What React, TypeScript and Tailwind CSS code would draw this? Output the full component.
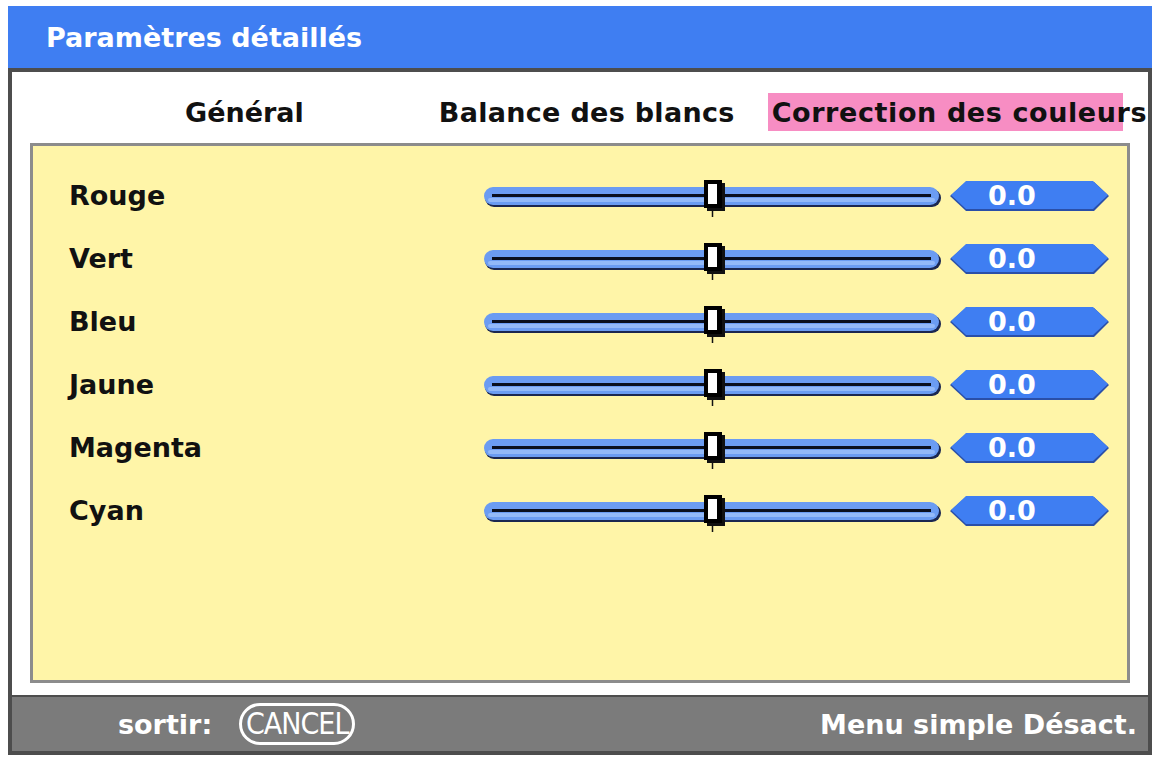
import React from 'react';

const font = { fontFamily: '"DejaVu Sans", "Liberation Sans", sans-serif' };

const colours = ['Rouge', 'Vert', 'Bleu', 'Jaune', 'Magenta', 'Cyan'];

const Slider: React.FC = () => (
  <svg width="460" height="40" viewBox="0 0 460 40" className="block">
    {/* shadow */}
    <rect x="1" y="12" width="456" height="18" rx="9" fill="#1b2750" />
    <rect x="0" y="10" width="455" height="18" rx="9" fill="#6b9cf2" />
    <rect x="4" y="21" width="447" height="4" rx="2" fill="#93b9f8" />
    <line x1="8" y1="18.5" x2="447" y2="18.5" stroke="#0a0f1e" strokeWidth="3" />
    {/* knob */}
    <rect x="223" y="6" width="18" height="28" fill="#111" />
    <rect x="220" y="3" width="18" height="28" fill="#000" />
    <rect x="224" y="7" width="9" height="20" fill="#fff" />
    <line x1="228.5" y1="33" x2="228.5" y2="40" stroke="#111" strokeWidth="1.5" />
  </svg>
);

const ValueBadge: React.FC<{ value: string }> = ({ value }) => (
  <div className="relative w-[160px] h-[30px]">
    <svg width="160" height="30" viewBox="0 0 160 30" className="absolute inset-0">
      <polygon points="0,15 16,1 144,1 159,15 144,30 16,30" fill="#2a4fa8" />
      <polygon points="1,14 16,0 143,0 158,14 143,28 16,28" fill="#3f7ef2" />
    </svg>
    <div
      className="relative h-full flex items-center justify-center pr-[36px] text-white font-bold text-[27px] leading-none"
      style={font}
    >
      {value}
    </div>
  </div>
);

export default function App() {
  return (
    <div className="min-h-screen bg-white pt-[6px] pl-[8px]" style={font}>
      <div className="w-[1144px]">
        {/* Title bar */}
        <div className="h-[62px] bg-[#3f7ef2] flex items-center pl-[38px]">
          <span className="text-white font-bold text-[27px] leading-none">Paramètres détaillés</span>
        </div>

        <div className="border-x-4 border-t-4 border-[#4d4d4d] bg-white pb-[12px]">
          {/* Tabs */}
          <div className="h-[71px] flex items-start pt-[21px] text-[27px] font-bold text-[#111] leading-none whitespace-nowrap">
            <span className="ml-[173px] h-[38px] flex items-center">Général</span>
            <span className="ml-[135px] h-[38px] flex items-center tracking-[0.3px]">Balance des blancs</span>
            <div className="ml-[33px] w-[355px] h-[38px] bg-[#f78dc3] flex items-center pl-[4px] overflow-visible">
              <span className="tracking-[0.6px]">Correction des couleurs</span>
            </div>
          </div>

          {/* Panel */}
          <div className="mx-[18px] h-[540px] border-[3px] border-[#8c8c8c] bg-[#fff5a8] pt-[18px]">
            {colours.map((c) => (
              <div key={c} className="h-[63px] flex items-center">
                <span className="w-[451px] pl-[36px] text-[27px] font-bold text-[#111] leading-none">{c}</span>
                <div className="w-[466px] mt-[2px]">
                  <Slider />
                </div>
                <ValueBadge value="0.0" />
              </div>
            ))}
          </div>
        </div>

        {/* Footer */}
        <div className="h-[60px] bg-[#7b7b7b] border-4 border-t-2 border-[#4d4d4d] flex items-center text-white font-bold text-[27px] leading-none">
          <span className="ml-[106px]">sortir:</span>
          <span
            className="ml-[27px] w-[116px] h-[42px] rounded-full border-[3px] border-white flex items-center justify-center font-normal text-[30px] tracking-[-1px]"
            style={{ fontFamily: '"Liberation Sans Narrow", "DejaVu Sans Condensed", "Liberation Sans", sans-serif' }}
          >
            CANCEL
          </span>
          <span className="ml-auto mr-[11px]">Menu simple Désact.</span>
        </div>
      </div>
    </div>
  );
}
